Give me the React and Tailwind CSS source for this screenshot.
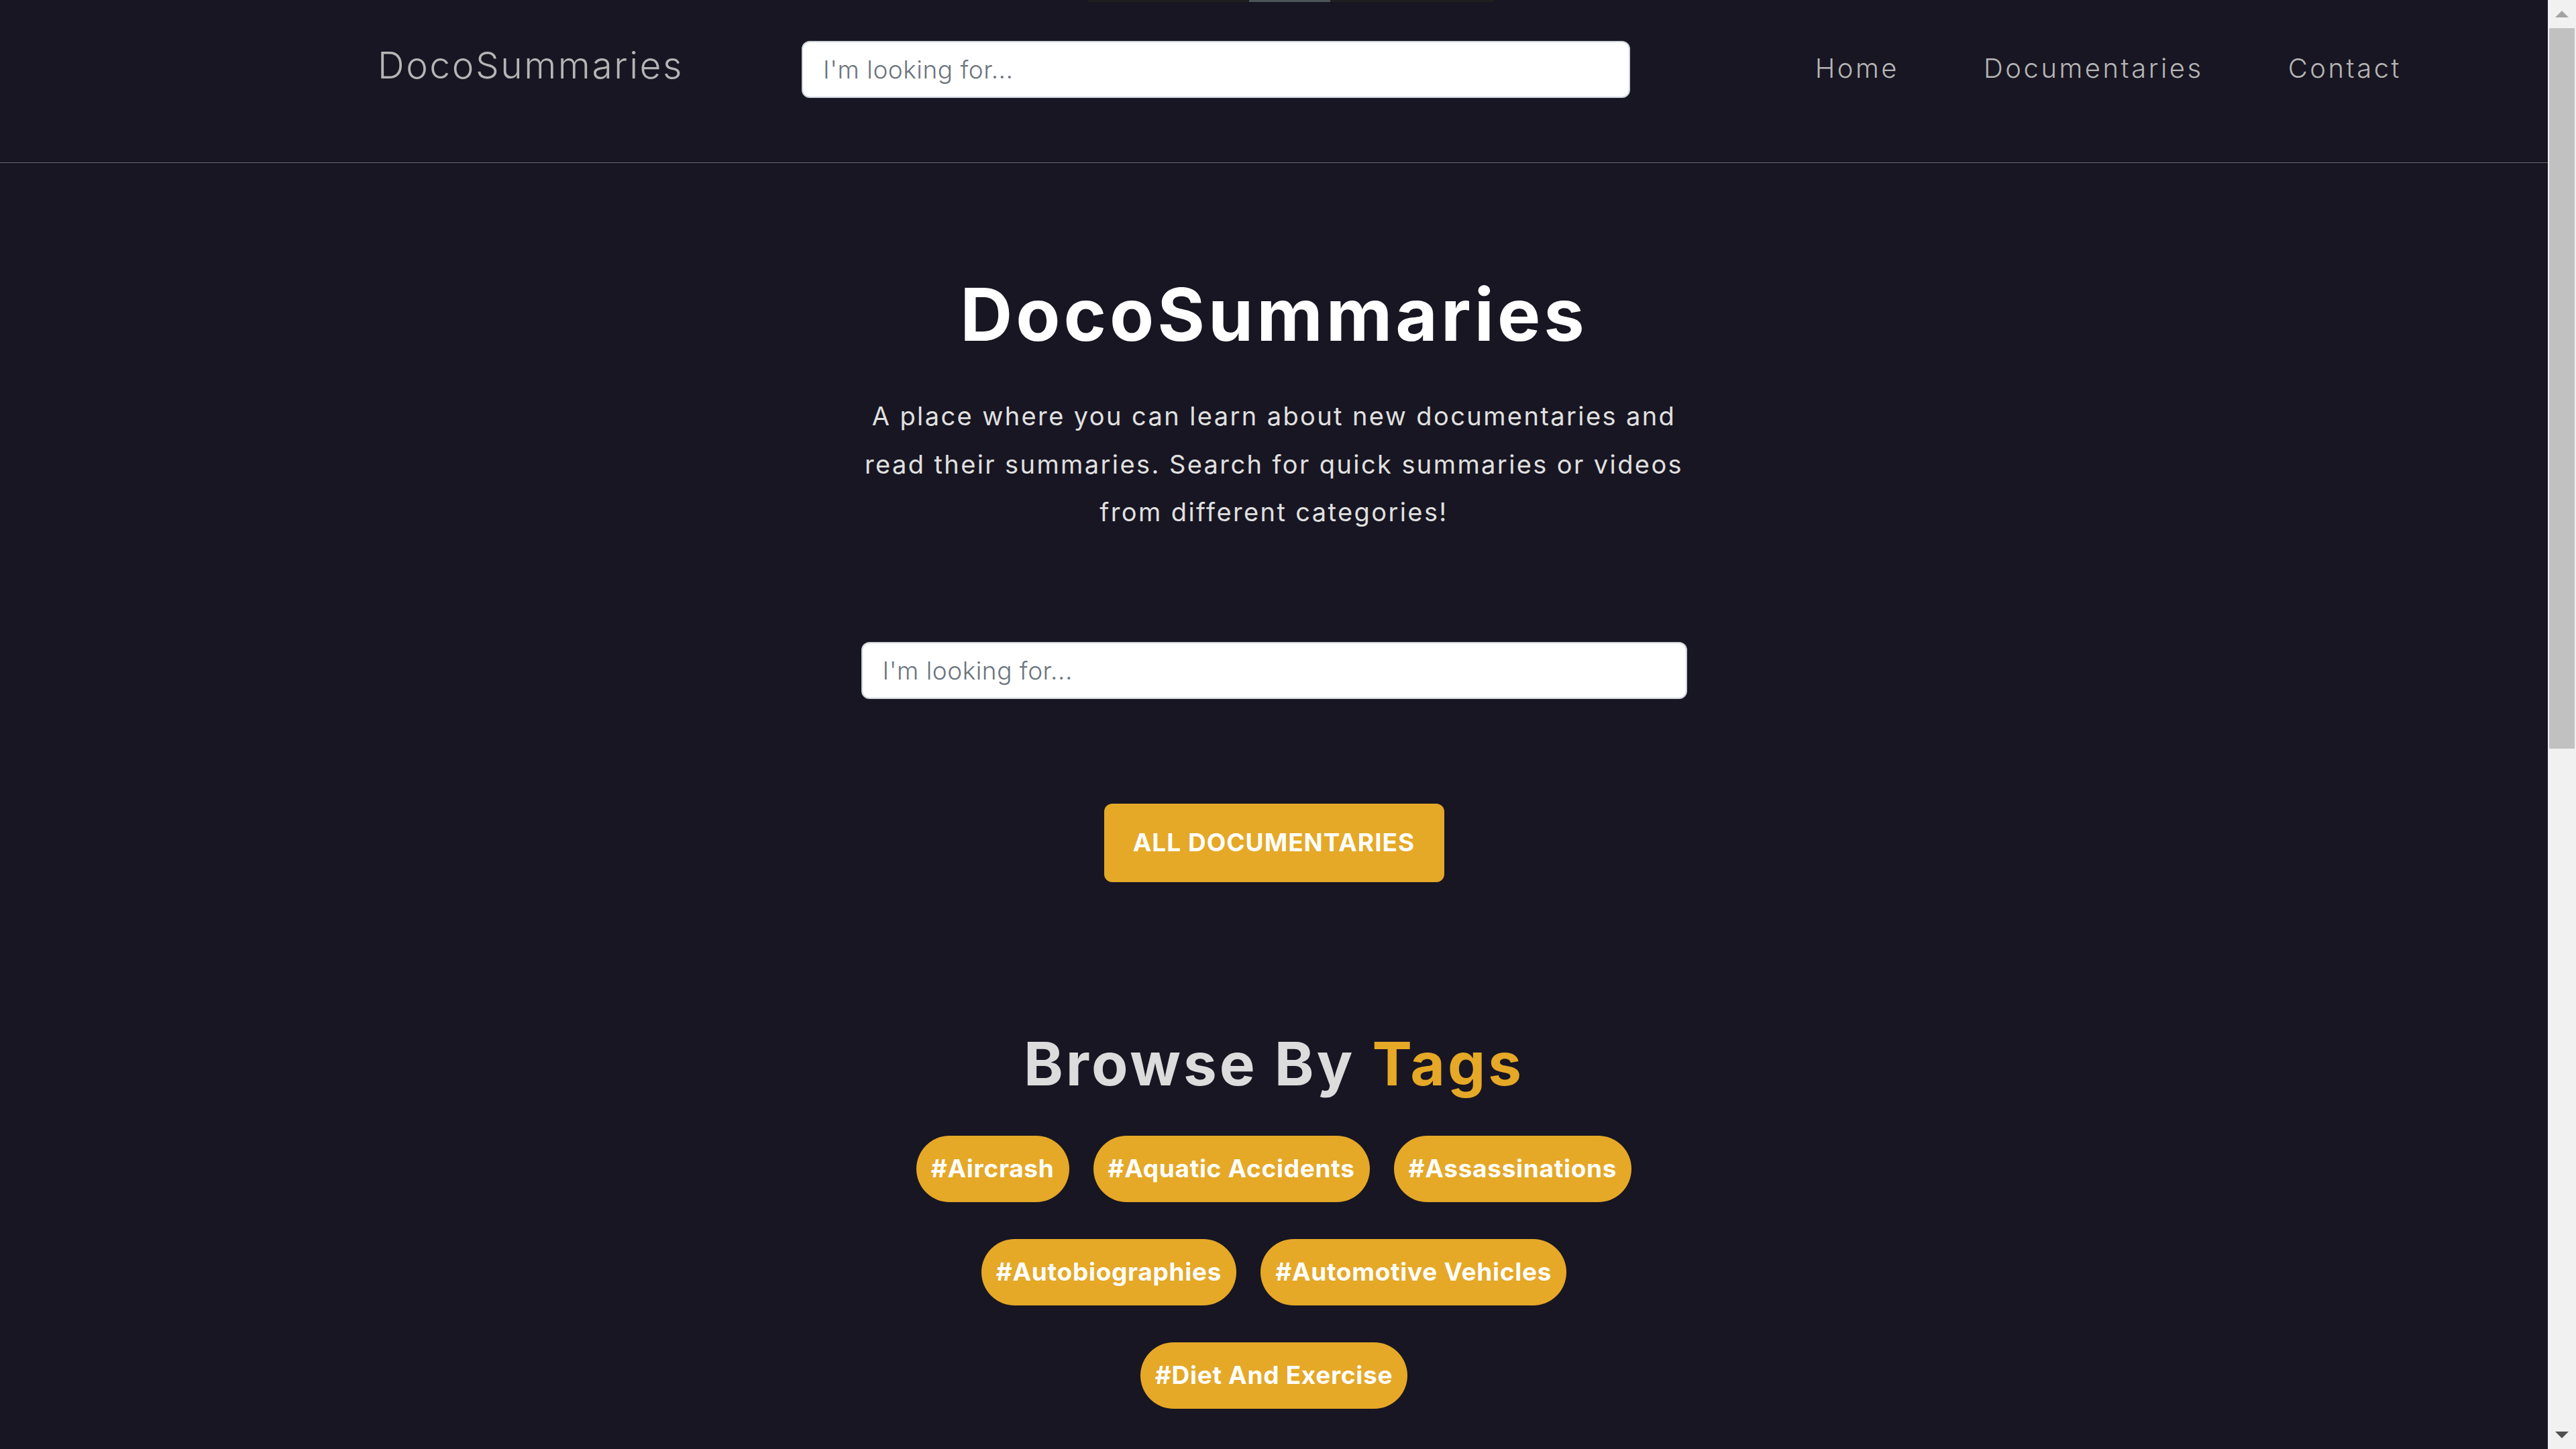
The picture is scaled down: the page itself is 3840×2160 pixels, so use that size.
import React from 'react';

const tagRows = [
  ['Aircrash', 'Aquatic Accidents', 'Assassinations'],
  ['Autobiographies', 'Automotive Vehicles'],
  ['Diet And Exercise'],
];

const navLinks = ['Home', 'Documentaries', 'Contact'];

const SearchBox = ({ className }) => (
  <input
    type="text"
    placeholder="I'm looking for..."
    className={`h-[85px] rounded-[12px] border-2 border-[#ced4da] bg-white px-[30px] text-[37px] font-light tracking-[0.5px] text-[#212529] outline-none placeholder:text-[#6c757d] ${className}`}
  />
);

// browser scrollbar as it appears in the screenshot
const Scrollbar = () => (
  <div className="flex w-[42px] shrink-0 flex-col bg-[#f1f1f1]">
    <div className="flex h-[42px] items-center justify-center">
      <svg width="20" height="10" viewBox="0 0 20 10">
        <path d="M10 0 L20 10 L0 10 Z" fill="#a3a3a3" />
      </svg>
    </div>
    <div className="mx-[2px] h-[1074px] bg-[#c1c1c1]"></div>
    <div className="flex-1"></div>
    <div className="flex h-[42px] items-center justify-center">
      <svg width="20" height="10" viewBox="0 0 20 10">
        <path d="M0 0 L20 0 L10 10 Z" fill="#505050" />
      </svg>
    </div>
  </div>
);

const App = () => {
  return (
    <div className="flex h-screen overflow-hidden bg-[#181622] font-[Inter,sans-serif]">
      <div className="flex-1 overflow-hidden">
        {/* Navbar */}
        <header className="relative flex h-[243px] items-start border-b border-[#66656d]">
          <div className="absolute left-[1621px] top-0 flex h-[3px] w-[606px] bg-[#1f1f1f]">
            <div className="ml-[241px] w-[121px] bg-[#4c5659]"></div>
          </div>
          <a href="#" className="ml-[563px] mt-[70px] text-[55px] font-light leading-none tracking-[2.6px] text-[#b5b5b5]">
            DocoSummaries
          </a>
          <SearchBox className="ml-[176px] mt-[61px] w-[1235px]" />
          <nav className="ml-auto mr-[218px] mt-[82px] flex gap-[126px]">
            {navLinks.map((link) => (
              <a key={link} href="#" className="text-[40px] font-light leading-none tracking-[3.5px] text-[#b5b5b5]">
                {link}
              </a>
            ))}
          </nav>
        </header>

        {/* Hero */}
        <main className="flex flex-col items-center pb-[2075px]">
          <h1 className="mt-[172px] text-[108px] font-bold leading-none tracking-[5px] text-white">DocoSummaries</h1>
          <p className="mt-[62px] text-center text-[38px] leading-[71.5px] tracking-[2.4px] text-[#e0e0e0]">
            A place where you can learn about new documentaries and
            <br />
            read their summaries. Search for quick summaries or videos
            <br />
            from different categories!
          </p>

          <SearchBox className="mt-[157px] w-[1231px]" />

          <button className="mt-[156px] h-[117px] w-[507px] rounded-[12px] bg-[#e5a827] text-[37px] font-bold uppercase tracking-[1px] text-white">
            All Documentaries
          </button>

          {/* Tags */}
          <h2 className="mt-[226px] text-[89px] font-bold leading-none tracking-[4px] text-[#dcdcdc]">
            Browse By <span className="text-[#e5a827]">Tags</span>
          </h2>
          <div className="mt-[63px] flex flex-col items-center gap-[55px]">
            {tagRows.map((row, i) => (
              <div key={i} className="flex gap-[36px]">
                {row.map((tag) => (
                  <a
                    key={tag}
                    href="#"
                    className="flex h-[99px] items-center rounded-full bg-[#e5a827] px-[22px] text-[37px] font-bold tracking-[0.7px] text-white"
                  >
                    #{tag}
                  </a>
                ))}
              </div>
            ))}
          </div>
        </main>
      </div>
      <Scrollbar />
    </div>
  );
};

export default App;
